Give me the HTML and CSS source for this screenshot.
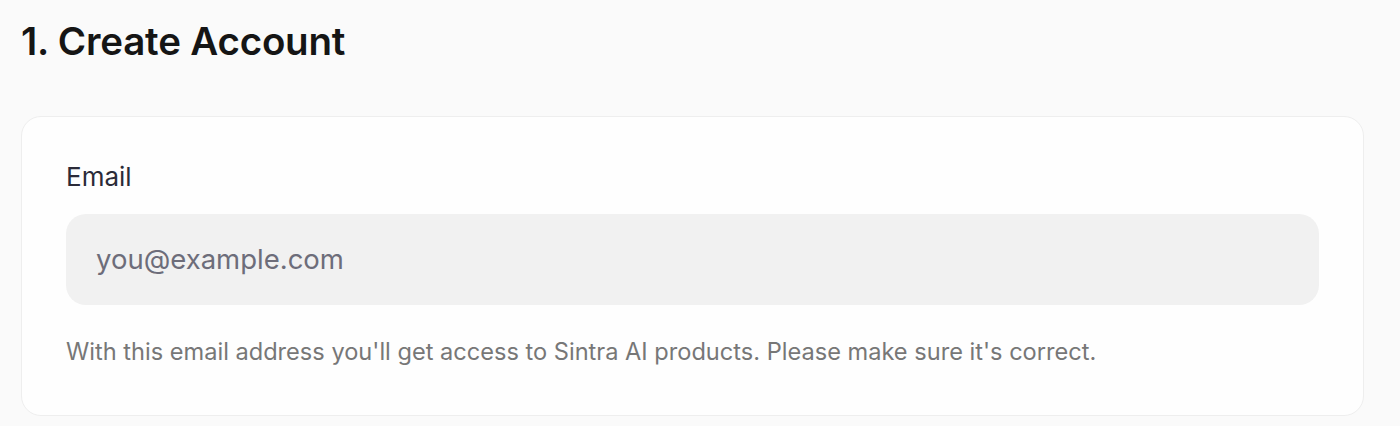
FILE: index.html
```html
<!DOCTYPE html>
<html>
<head>
<meta charset="utf-8">
<link rel="stylesheet" href="styles.css">
</head>
<body>
<main class="page">
  <h1 class="title">1. Create Account</h1>
  <section class="card">
    <label class="label" for="email">Email</label>
    <input id="email" class="input" type="email" placeholder="you@example.com">
    <p class="hint">With this email address you'll get access to Sintra AI products. Please make sure it's correct.</p>
  </section>
</main>
</body>
</html>
```

FILE: styles.css
```css
html, body {
  margin: 0;
  padding: 0;
  background: #fafafa;
}
body {
  font-family: Inter, "Noto Sans", sans-serif;
}
.page {
  padding: 18px 36px 0 21px;
}
.title {
  margin: 0;
  font-size: 38.5px;
  font-weight: 560;
  line-height: 46px;
  letter-spacing: -0.2px;
  color: #151515;
}
.card {
  margin-top: 52px;
  background: #fefefe;
  border: 1.5px solid #eeeeee;
  border-radius: 20px;
  padding: 44px 44px 48px 44px;
  display: flex;
  flex-direction: column;
}
.label {
  font-size: 26px;
  line-height: 32px;
  color: #2b2b38;
  font-weight: 400;
}
.input {
  margin-top: 20.5px;
  height: 91px;
  box-sizing: border-box;
  border: none;
  border-radius: 20px;
  background: #f1f1f1;
  padding: 0 30px;
  font-family: inherit;
  font-size: 27.5px;
  color: #222;
  outline: none;
}
.input::placeholder {
  color: #6d6d7a;
}
.hint {
  margin: 32.5px 0 0 0;
  font-size: 23.6px;
  line-height: 30px;
  color: #777777;
}
```
